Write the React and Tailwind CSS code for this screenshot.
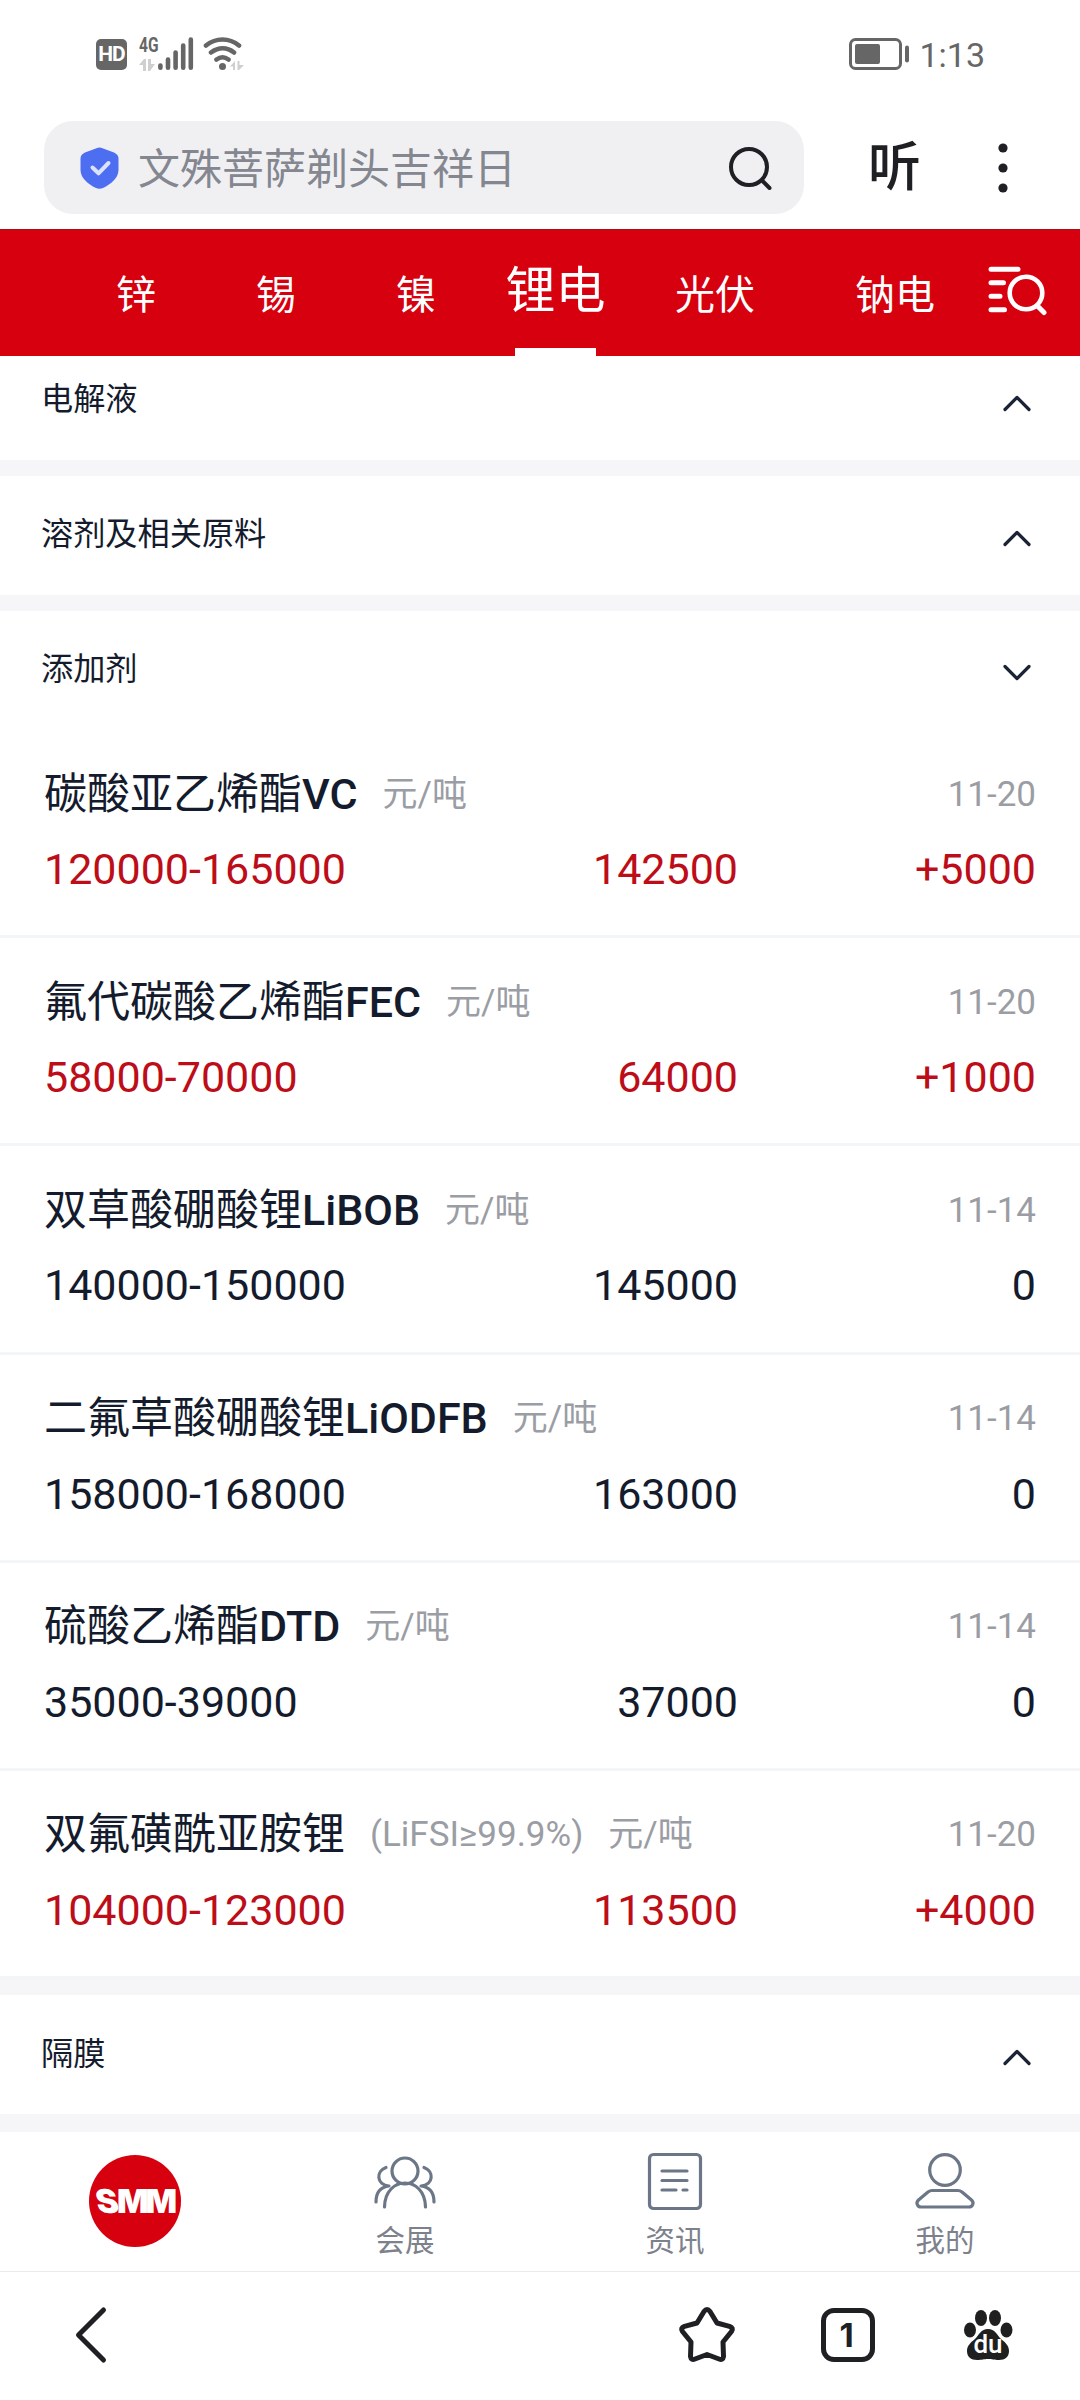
import React from 'react'

const tabs = [
  { label: '锌', width: 'w-[140px]' },
  { label: '锡', width: 'w-[140px]' },
  { label: '镍', width: 'w-[140px]' },
  { label: '锂电', width: 'w-[139px]', active: true },
  { label: '光伏', width: 'w-[180px]' },
  { label: '钠电', width: 'w-[180px]' },
]

const prices = [
  { name: '碳酸亚乙烯酯', code: 'VC', date: '11-20', range: '120000-165000', avg: '142500', change: '+5000' },
  { name: '氟代碳酸乙烯酯', code: 'FEC', date: '11-20', range: '58000-70000', avg: '64000', change: '+1000' },
  { name: '双草酸硼酸锂', code: 'LiBOB', date: '11-14', range: '140000-150000', avg: '145000', change: '0' },
  { name: '二氟草酸硼酸锂', code: 'LiODFB', date: '11-14', range: '158000-168000', avg: '163000', change: '0' },
  { name: '硫酸乙烯酯', code: 'DTD', date: '11-14', range: '35000-39000', avg: '37000', change: '0' },
  { name: '双氟磺酰亚胺锂', spec: '(LiFSI≥99.9%)', date: '11-20', range: '104000-123000', avg: '113500', change: '+4000' },
]

function StatusBar() {
  return (
    <div className="flex h-[108px] shrink-0 items-center justify-between pl-[96px] pr-[95px] text-[#666666]">
      <div className="flex items-center">
        <div className="flex h-[31px] w-[31px] items-center justify-center rounded-[5px] bg-[#666666] text-[21px] leading-none font-bold tracking-[-1px] text-white">
          HD
        </div>
        <div className="ml-[12px] flex h-[34px] w-[18px] flex-col justify-between">
          <span className="origin-left scale-x-[0.74] text-[21px] leading-[16px] font-bold">4G</span>
          <svg className="h-[12px] w-[17px]" viewBox="0 0 17 12" fill="#cfcfcf">
            <path d="M0 6 5 0h2v12H4V6zM9 0h3l0 5h4l-5 7H9z" />
          </svg>
        </div>
        <svg className="h-[34px] w-[37px]" viewBox="156 37 37 34" stroke="#666666" strokeWidth="4.6" strokeLinecap="round">
          <path d="M159.4 65.5v2.3M167 59.5v8.3M174.6 52.5v15.3M182.2 45.5v22.3M189.8 39.5v28.3" />
        </svg>
        <svg className="ml-[9px] h-[36px] w-[42px]" viewBox="202 36 42 36" fill="none" stroke="#666666" strokeWidth="4.6" strokeLinecap="round">
          <path d="M205 45.5c10-8 23-8 33 0M210 52.5c7.5-5.5 16-5.5 23 0M215.500 59.500c4-3 8-3 12 0" />
          <circle cx="221.500" cy="66.500" r="3.500" fill="#666666" stroke="none" />
          <path d="M229 66.500 234 61v9h-2v-3.500zM236.500 61h2v4h4.500l-5 5h-1.500z" fill="#cfcfcf" stroke="none" />
        </svg>
      </div>
      <div className="flex items-center">
        <svg className="h-[32px] w-[61px]" viewBox="848 38.500 61 32" fill="none" stroke="#666666">
          <rect x="849.500" y="40" width="50" height="29" rx="5" strokeWidth="3" />
          <rect x="854" y="44.500" width="25" height="20" rx="2" fill="#666666" stroke="none" />
          <rect x="904" y="46" width="4" height="17" rx="2" fill="#666666" stroke="none" />
        </svg>
        <span className="ml-[9px] pt-[2px] text-[34px] leading-none">1:13</span>
      </div>
    </div>
  )
}

function SearchRow() {
  return (
    <div className="mt-[13px] mb-[15px] flex h-[93px] shrink-0 items-center pl-[44px]">
      <div className="flex h-full w-[760px] items-center rounded-[29px] bg-[#f0f0f2] pr-[31px] pl-[36px]">
        <svg className="h-[42px] w-[39px]" viewBox="0 0 39 42">
          <path d="M16.500 1.200q3-1.300 6 0L34 5.500q4.500 2 4.500 6V23c0 8.500-8.500 14.500-15 17.800q-4 1.700-8 0C9 37.500.500 31.500.500 23V11.500q0-4 4.500-6z" fill="#4e6ef2" />
          <path d="m12.500 20.500 6 5.800 10-10.300" fill="none" stroke="#dbe2fd" strokeWidth="4" strokeLinecap="round" strokeLinejoin="round" />
        </svg>
        <span className="ml-[19px] flex-1 pt-[4px] text-[42px] leading-none text-[#848690]">文殊菩萨剃头吉祥日</span>
        <svg className="h-[44px] w-[46px]" viewBox="727 145 46 44" fill="none" stroke="#1f2024" strokeWidth="4" strokeLinecap="round">
          <circle cx="749" cy="166" r="18" />
          <path d="m762 179.500 7.500 7.500" />
        </svg>
      </div>
      <span className="ml-[64px] pt-[2px] text-[53px] leading-none font-medium text-[#1f2024]">听</span>
      <svg className="ml-[77px] h-[50px] w-[10px]" viewBox="0 0 10 50" fill="#1f2024">
        <circle cx="5" cy="5" r="4.600" />
        <circle cx="5" cy="25" r="4.600" />
        <circle cx="5" cy="45" r="4.600" />
      </svg>
    </div>
  )
}

function MetalTabs() {
  return (
    <nav className="flex h-[127px] shrink-0 border-t border-[#a3101a] bg-[#d7000f] pl-[66px] text-white">
      {tabs.map((tab) => (
        <div key={tab.label} className={`flex flex-col items-center justify-between ${tab.width}`}>
          <span className={tab.active ? 'pt-[36px] text-[50px] leading-[50px]' : 'pt-[46px] text-[40px] leading-[40px]'}>
            {tab.label}
          </span>
          {tab.active && <div className="h-[8px] w-[81px] bg-white" />}
        </div>
      ))}
      <svg className="mt-[34px] h-[56px] w-[62px]" viewBox="985 264 62 56" fill="none" stroke="#ffffff" strokeWidth="5" strokeLinecap="round">
        <path d="M991 269.200h27M991 282.700h12.500M991 296.200h9M991 309.700h13.500" />
        <circle cx="1026" cy="293" r="16.300" strokeWidth="4.600" />
        <path d="m1037.500 306 6.500 6.500" />
      </svg>
    </nav>
  )
}

function SectionHeader({ title, open }) {
  return (
    <div className="flex h-[119px] shrink-0 items-center justify-between bg-white pr-[48px] pl-[41px]">
      <span className="pb-[2px] text-[32.2px] leading-none text-[#141b2d]">{title}</span>
      <svg className="mt-[4px] h-[18px] w-[30px]" viewBox="0 0 30 18" fill="none" stroke="#1b2437" strokeWidth="3.200" strokeLinecap="round" strokeLinejoin="round">
        <path d={open ? 'M3 2.500 15 14.500 27 2.500' : 'M3 15.500 15 3.500 27 15.500'} />
      </svg>
    </div>
  )
}

function PriceRow({ item }) {
  const color = item.change === '0' ? 'text-[#141b2d]' : 'text-[#bd0d18]'
  return (
    <div className="h-[208.2px] shrink-0 border-b-[3px] border-[#f3f6f9] bg-white pr-[44px] pl-[44px] pt-[35px]">
      <div className="flex h-[58px] items-center">
        <span className="text-[43px] leading-none text-[#141b2d]">
          {item.name}
          {item.code && <span className="font-medium">{item.code}</span>}
        </span>
        {item.spec && <span className="ml-[25px] text-[35px] leading-none text-[#9b9da4]">{item.spec}</span>}
        <span className="ml-[25px] text-[35px] leading-none text-[#9b9da4]">元/吨</span>
        <span className="ml-auto text-[35px] leading-none text-[#9b9da4]">{item.date}</span>
      </div>
      <div className={`mt-[17.500px] flex h-[58px] items-center text-[43px] leading-none ${color}`}>
        <span className="w-[394px]">{item.range}</span>
        <span className="w-[300px] text-right">{item.avg}</span>
        <span className="flex-1 text-right">{item.change}</span>
      </div>
    </div>
  )
}

function TabItem({ label, children }) {
  return (
    <div className="flex flex-1 flex-col items-center pt-[19px]">
      <svg className="h-[62px] w-[64px]" viewBox="0 0 64 62" fill="none" stroke="#6b7687" strokeWidth="3.200" strokeLinecap="round" strokeLinejoin="round">
        {children}
      </svg>
      <span className="mt-[14px] text-[29.500px] leading-[29px] text-[#7d818b]">{label}</span>
    </div>
  )
}

function SiteTabs() {
  return (
    <div className="flex h-[139px] shrink-0 bg-white">
      <div className="flex flex-1 justify-center pt-[23px]">
        <div className="flex h-[92px] w-[92px] items-center justify-center rounded-full bg-[#d7000f]">
          <span className="flex items-center font-['Inter'] text-[33px] leading-none font-black text-white">
            <span className="mr-[-1px] skew-x-[12deg]">S</span>
            <span className="tracking-[-3px]">MM</span>
          </span>
        </div>
      </div>
      <TabItem label="会展">
        <circle cx="32" cy="20" r="13" />
        <path d="M11.500 56C12 24 52 24 52.500 56" />
        <path d="M13 16.500C3 20 3 34 16 35C7 36 3 42 3 51M51 16.500C61 20 61 34 48 35C57 36 61 42 61 51" />
      </TabItem>
      <TabItem label="资讯">
        <rect x="6.500" y="3.500" width="51" height="54" rx="4" />
        <path d="M19 20h25M19 29.500h25M19 39h14M40 39h4" />
      </TabItem>
      <TabItem label="我的">
        <circle cx="32" cy="19" r="15.300" />
        <path d="M19 39.500h26q2 0 4 1.500l9.500 8q2.500 2.500 1 5-1 2-3.500 2H8q-2.500 0-3.500-2-1.500-2.500 1-5L15 41q2-1.500 4-1.500z" />
      </TabItem>
    </div>
  )
}

function BrowserBar() {
  return (
    <div className="flex flex-1 items-center border-t border-[#e9eaec] bg-white pr-[67px] pb-[2px] pl-[74px]">
      <svg className="h-[58px] w-[34px]" viewBox="0 0 34 58" fill="none" stroke="#1f2024" strokeWidth="5" strokeLinecap="round" strokeLinejoin="round">
        <path d="M29.500 4 4.500 29 29.500 54" />
      </svg>
      <svg className="ml-auto h-[58px] w-[60px]" viewBox="0 0 60 58" fill="none" stroke="#1f2024" strokeWidth="5" strokeLinejoin="round">
        <path d="M27 5.500q3-4 6 0l7 11.500 12.500 3.300q4.500 1.700 2 5.200L46 36l.5 14.500q-.5 4-4.500 2.500L30 48.500 18 53q-4 1.500-4.500-2.500L14 36 5.500 25.500q-2.500-3.500 2-5.200L20 17z" />
      </svg>
      <div className="ml-[84px] flex h-[54px] w-[54px] items-center justify-center rounded-[13px] border-[5px] border-[#1f2024] pr-[3px] font-['Inter'] text-[33px] leading-none font-bold text-[#1f2024]">
        1
      </div>
      <div className="relative ml-[88px]">
        <svg className="h-[52px] w-[50px]" viewBox="0 0 50 52" fill="#1f1f1f">
          <ellipse cx="7" cy="21" rx="6" ry="7.500" />
          <ellipse cx="18" cy="9" rx="6" ry="8" />
          <ellipse cx="32" cy="9" rx="6" ry="8" />
          <ellipse cx="43.500" cy="21" rx="6" ry="7.500" />
          <path d="M25 20c7 0 9 6 13 10 5 4 8 7 8 12 0 6-4 9-10 9-5 0-7-1-11-1s-6 1-11 1c-6 0-10-3-10-9 0-5 3-8 8-12 4-4 6-10 13-10z" />
        </svg>
        <span className="absolute top-[22px] left-[9px] w-[32px] text-center text-[26px] leading-[26px] font-medium text-white">du</span>
      </div>
    </div>
  )
}

function App() {
  return (
    <div className="flex h-[2400px] w-[1080px] flex-col overflow-hidden bg-white font-['Roboto','Noto_Sans_CJK_SC',sans-serif]">
      <StatusBar />
      <SearchRow />
      <MetalTabs />

      {/* Price list, scrolled part-way under the tab bar */}
      <main className="flex h-[1776px] shrink-0 flex-col overflow-hidden bg-[#f6f6f8]">
        <div className="-mt-[15px] flex flex-col gap-[16px]">
          <SectionHeader title="电解液" />
          <SectionHeader title="溶剂及相关原料" />
          <div>
            <SectionHeader title="添加剂" open />
            {prices.map((item) => (
              <PriceRow key={item.name} item={item} />
            ))}
          </div>
          <SectionHeader title="隔膜" />
        </div>
      </main>

      <SiteTabs />
      <BrowserBar />
    </div>
  )
}

export default App
